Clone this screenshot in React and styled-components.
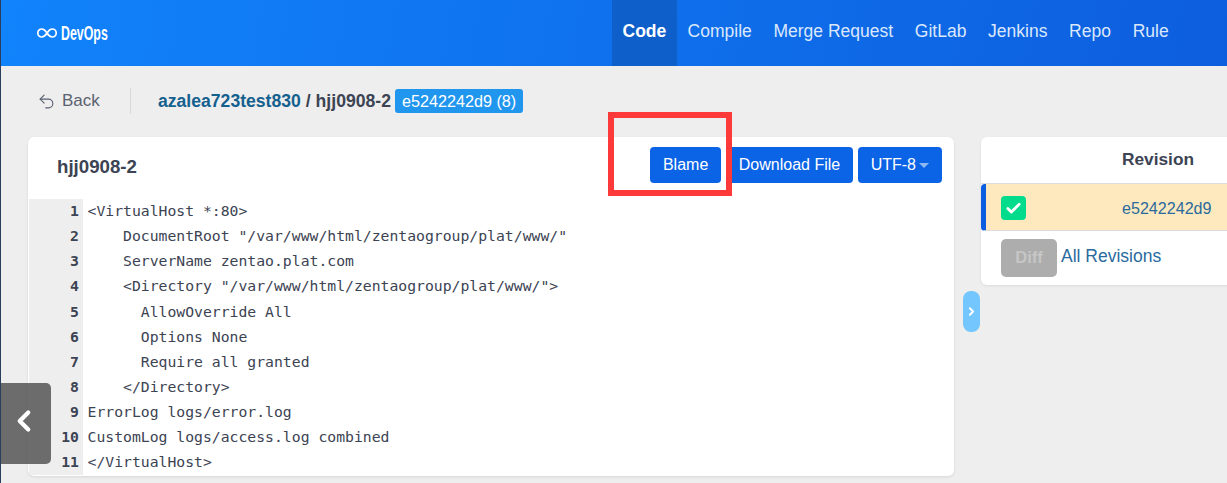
import { createGlobalStyle } from "styled-components";
import styled from "styled-components";
import { ChevronLeft, ChevronRight, Check, Undo2 } from "lucide-react";

const GlobalStyle = createGlobalStyle`
  html, body {
    margin: 0;
    padding: 0;
    background: #eeeeee;
  }
  * {
    box-sizing: border-box;
  }
`;

// Page shell
const Page = styled.div`
  position: relative;
  width: 1227px;
  height: 483px;
  overflow: hidden;
  background: #eeeeee;
  border-left: 1px solid #2c3e5d;
  font-family: "Liberation Sans", Arial, sans-serif;
  color: #3c4353;
`;

// Header
const Header = styled.header`
  height: 66px;
  display: flex;
  align-items: stretch;
  padding-left: 36px;
  background: linear-gradient(100deg, #1183fb 0%, #0d5ede 100%);
`;

const Logo = styled.div`
  width: 575px;
  display: flex;
  align-items: center;
  gap: 4px;
  color: #fff;
`;

const LogoText = styled.span`
  display: inline-block;
  font-size: 21px;
  font-weight: 700;
  transform: scaleX(0.59);
  transform-origin: left center;
`;

const Nav = styled.nav`
  display: flex;
`;

const NavItem = styled.a`
  padding: 0 ${(p) => (p.$active ? "10.5px" : "10.85px")};
  display: flex;
  align-items: center;
  height: 66px;
  padding-bottom: 3px;
  font-size: 17.5px;
  color: ${(p) => (p.$active ? "#fff" : "#dbe8fb")};
  font-weight: ${(p) => (p.$active ? 700 : 400)};
  background: ${(p) => (p.$active ? "#0f5fcb" : "transparent")};
`;

// Breadcrumb
const Crumbs = styled.div`
  height: 71px;
  display: flex;
  align-items: center;
  padding-left: 36px;
  padding-bottom: 1px;
`;

const BackLink = styled.a`
  display: flex;
  align-items: center;
  gap: 6px;
  font-size: 17px;
  color: #5a6170;
  width: 94px;
  height: 26px;
  border-right: 1px solid #d8d8d8;
  margin-right: 27px;
`;

const RepoName = styled.a`
  font-size: 17.6px;
  font-weight: 700;
  color: #14608f;
`;

const CrumbText = styled.span`
  font-size: 17.6px;
  font-weight: 700;
  color: #3c4353;
  margin: 0 4px 0 5px;
`;

const Badge = styled.span`
  height: 24px;
  padding: 0 7px;
  display: flex;
  align-items: center;
  border-radius: 3px;
  background: #2196ee;
  color: #fff;
  font-size: 16.2px;
`;

// Main area
const Columns = styled.div`
  display: flex;
  align-items: flex-start;
  padding-left: 27px;
`;

const Card = styled.section`
  width: 926px;
  height: 339px;
  flex: none;
  overflow: hidden;
  background: #fff;
  border-radius: 6px;
  box-shadow: 0 1px 3px rgba(0, 0, 0, 0.1);
`;

const CardHead = styled.div`
  height: 62px;
  display: flex;
  align-items: flex-start;
  justify-content: space-between;
  padding: 10px 12px 0 29px;
`;

const CardTitle = styled.h2`
  margin: 9px 0 0;
  font-size: 18.7px;
  font-weight: 700;
  color: #3c4353;
`;

const Buttons = styled.div`
  display: flex;
  gap: 4.5px;
`;

const Button = styled.button`
  height: 36px;
  padding: 0 13px;
  display: flex;
  align-items: center;
  gap: 3px;
  border: none;
  border-radius: 4px;
  background: #0b63e5;
  color: #fff;
  font-family: inherit;
  font-size: 16px;
`;

const Caret = styled.span`
  width: 0;
  height: 0;
  border-left: 5px solid transparent;
  border-right: 5px solid transparent;
  border-top: 5px solid #8db8f2;
`;

const Code = styled.div`
  display: grid;
  grid-template-columns: 54px 1fr;
  margin-left: 1px;
`;

const LineNo = styled.div`
  height: 25.14px;
  line-height: 23.14px;
  padding-right: 4px;
  text-align: right;
  background: #eeeeee;
  font-family: "DejaVu Sans Mono", monospace;
  font-size: 14.75px;
  font-weight: 700;
  color: #3c4353;
`;

const LineText = styled.pre`
  margin: 0;
  height: 25.14px;
  line-height: 23.14px;
  padding-left: 4.5px;
  font-family: "DejaVu Sans Mono", monospace;
  font-size: 14.75px;
  color: #3c4353;
`;

// Toggle between the columns
const Toggle = styled.div`
  width: 17px;
  height: 41px;
  flex: none;
  align-self: flex-start;
  margin: 154px 1px 0 9px;
  display: flex;
  align-items: center;
  justify-content: center;
  border-radius: 8px;
  background: #74c6ff;
  color: #fff;
`;

// Revision side panel, runs off the right edge
const Side = styled.aside`
  width: 280px;
  height: 148px;
  flex: none;
  overflow: hidden;
  background: #fff;
  border-radius: 6px 0 0 6px;
  box-shadow: 0 1px 3px rgba(0, 0, 0, 0.08);
`;

const SideHead = styled.div`
  height: 47px;
  padding: 12px 0 0 141px;
  font-size: 17.3px;
  font-weight: 700;
  color: #3c4353;
  border-bottom: 1px solid #dddddd;
`;

const RevRow = styled.div`
  height: 47px;
  display: flex;
  align-items: center;
  padding: 2px 0 0 15px;
  background: #fde9bd;
  border-left: 5px solid #0b5ee0;
  border-bottom: 1px solid #dddddd;
  border-top-left-radius: 4px;
  border-bottom-left-radius: 4px;
`;

const CheckBox = styled.span`
  width: 25px;
  height: 24px;
  display: flex;
  align-items: center;
  justify-content: center;
  border-radius: 4px;
  background: #00dc8c;
  color: #fff;
`;

const RevLink = styled.a`
  margin-left: 96px;
  font-size: 16.1px;
  color: #2a6a9e;
`;

const DiffRow = styled.div`
  display: flex;
  align-items: center;
  gap: 4px;
  padding: 8px 0 0 20px;
`;

const DiffButton = styled.button`
  width: 56px;
  height: 38px;
  padding: 0 0 2px;
  border: none;
  border-radius: 5px;
  background: #adadad;
  color: #c6c6c6;
  font-family: inherit;
  font-size: 16.5px;
  font-weight: 700;
`;

const AllLink = styled.a`
  margin-top: -4px;
  font-size: 17.5px;
  color: #2a6a9e;
`;

// Collapse tab over the code, left edge
const SideTab = styled.div`
  position: absolute;
  left: 0;
  top: 383px;
  width: 50px;
  height: 81px;
  padding: 0 5px 5px 0;
  display: flex;
  align-items: center;
  justify-content: center;
  border-radius: 0 5px 5px 0;
  background: rgba(85, 85, 85, 0.85);
  color: #fff;
`;

// Red highlight drawn over the screenshot
const Highlight = styled.div`
  position: absolute;
  left: 607px;
  top: 112px;
  width: 124px;
  height: 84px;
  border: 6px solid #fe3939;
`;

const lines = [
  "<VirtualHost *:80>",
  '    DocumentRoot "/var/www/html/zentaogroup/plat/www/"',
  "    ServerName zentao.plat.com",
  '    <Directory "/var/www/html/zentaogroup/plat/www/">',
  "      AllowOverride All",
  "      Options None",
  "      Require all granted",
  "    </Directory>",
  "ErrorLog logs/error.log",
  "CustomLog logs/access.log combined",
  "</VirtualHost>",
];

const navItems = ["Code", "Compile", "Merge Request", "GitLab", "Jenkins", "Repo", "Rule"];

const App = () => {
  return (
    <Page>
      <GlobalStyle />
      <Header>
        <Logo>
          <svg width="20" height="14" viewBox="0 0 20 14" fill="none" stroke="currentColor" strokeWidth="1.7">
            <path d="M10 7C8.5 4.6 7 3 4.8 3a4 4 0 0 0 0 8C7 11 8.5 9.4 10 7c1.500-2.400 3-4 5.200-4a4 4 0 0 1 0 8C13 11 11.500 9.400 10 7z" />
          </svg>
          <LogoText>DevOps</LogoText>
        </Logo>
        <Nav>
          {navItems.map((item, i) => (
            <NavItem key={item} $active={i === 0}>
              {item}
            </NavItem>
          ))}
        </Nav>
      </Header>
      <Crumbs>
        <BackLink>
          <Undo2 size={19} strokeWidth={1.4} />
          Back
        </BackLink>
        <RepoName>azalea723test830</RepoName>
        <CrumbText>/ hjj0908-2</CrumbText>
        <Badge>e5242242d9 (8)</Badge>
      </Crumbs>
      <Columns>
        <Card>
          <CardHead>
            <CardTitle>hjj0908-2</CardTitle>
            <Buttons>
              <Button>Blame</Button>
              <Button>Download File</Button>
              <Button>
                UTF-8
                <Caret />
              </Button>
            </Buttons>
          </CardHead>
          <Code>
            {lines.map((line, i) => (
              <div key={"line-" + i} style={{ display: "contents" }}>
                <LineNo>{i + 1}</LineNo>
                <LineText>{line}</LineText>
              </div>
            ))}
          </Code>
        </Card>
        <Toggle>
          <ChevronRight size={13} strokeWidth={3.5} />
        </Toggle>
        <Side>
          <SideHead>Revision</SideHead>
          <RevRow>
            <CheckBox>
              <Check size={17} strokeWidth={4} />
            </CheckBox>
            <RevLink>e5242242d9</RevLink>
          </RevRow>
          <DiffRow>
            <DiffButton>Diff</DiffButton>
            <AllLink>All Revisions</AllLink>
          </DiffRow>
        </Side>
      </Columns>
      <SideTab>
        <ChevronLeft size={34} strokeWidth={3} />
      </SideTab>
      <Highlight />
    </Page>
  );
};

export default App;
